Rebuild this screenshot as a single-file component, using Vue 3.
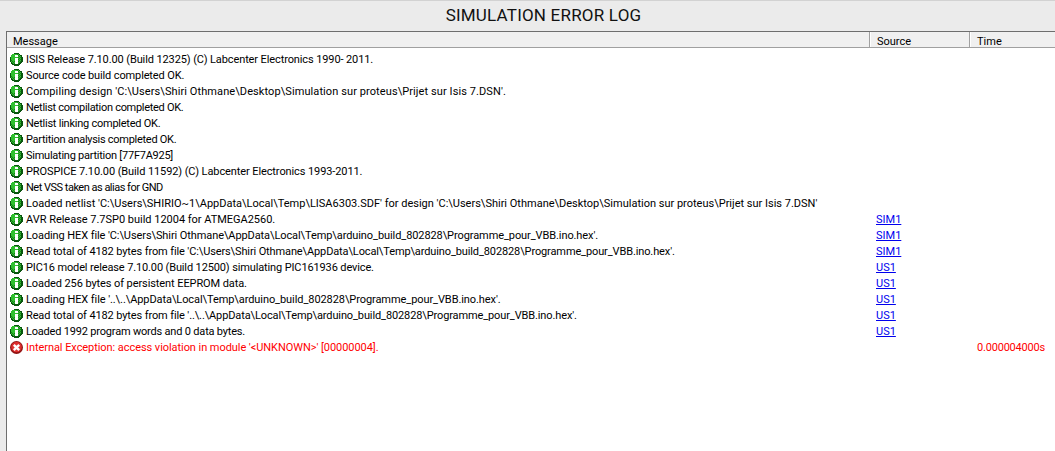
<script setup>
const rows = [
  { m: "ISIS Release 7.10.00 (Build 12325) (C) Labcenter Electronics 1990- 2011.", ls: -0.11 },
  { m: "Source code build completed OK.", ls: -0.13 },
  { m: "Compiling design 'C:\\Users\\Shiri Othmane\\Desktop\\Simulation sur proteus\\Prijet sur Isis 7.DSN'.", ls: 0.09 },
  { m: "Netlist compilation completed OK.", ls: -0.3 },
  { m: "Netlist linking completed OK.", ls: -0.24 },
  { m: "Partition analysis completed OK.", ls: -0.28 },
  { m: "Simulating partition [77F7A925]", ls: -0.25 },
  { m: "PROSPICE 7.10.00 (Build 11592) (C) Labcenter Electronics 1993-2011.", ls: -0.1 },
  { m: "Net VSS taken as alias for GND", ls: -0.5 },
  { m: "Loaded netlist 'C:\\Users\\SHIRIO~1\\AppData\\Local\\Temp\\LISA6303.SDF' for design 'C:\\Users\\Shiri Othmane\\Desktop\\Simulation sur proteus\\Prijet sur Isis 7.DSN'", ls: 0 },
  { m: "AVR Release 7.7SP0 build 12004 for ATMEGA2560.", s: "SIM1", ls: -0.02 },
  { m: "Loading HEX file 'C:\\Users\\Shiri Othmane\\AppData\\Local\\Temp\\arduino_build_802828\\Programme_pour_VBB.ino.hex'.", s: "SIM1", ls: -0.09 },
  { m: "Read total of 4182 bytes from file 'C:\\Users\\Shiri Othmane\\AppData\\Local\\Temp\\arduino_build_802828\\Programme_pour_VBB.ino.hex'.", s: "SIM1", ls: -0.12 },
  { m: "PIC16 model release 7.10.00 (Build 12500) simulating PIC161936 device.", s: "US1", ls: -0.13 },
  { m: "Loaded 256 bytes of persistent EEPROM data.", s: "US1", ls: -0.09 },
  { m: "Loading HEX file '..\\..\\AppData\\Local\\Temp\\arduino_build_802828\\Programme_pour_VBB.ino.hex'.", s: "US1", ls: -0.08 },
  { m: "Read total of 4182 bytes from file '..\\..\\AppData\\Local\\Temp\\arduino_build_802828\\Programme_pour_VBB.ino.hex'.", s: "US1", ls: -0.12 },
  { m: "Loaded 1992 program words and 0 data bytes.", s: "US1", ls: -0.19 },
  { m: "Internal Exception: access violation in module '<UNKNOWN>' [00000004].", t: "0.000004000s", err: true, ls: -0.06 },
];
</script>

<template>
  <div class="window">
    <div class="topline"></div>
    <h1 class="title">SIMULATION ERROR LOG</h1>
    <div class="table">
      <div class="head">
        <div class="hc c-msg">Message</div>
        <div class="hc c-src">Source</div>
        <div class="hc c-time">Time</div>
      </div>
      <div class="body">
        <svg class="defs" width="0" height="0">
          <defs>
            <pattern id="dith" width="2" height="2" patternUnits="userSpaceOnUse">
              <rect x="0" y="0" width="1" height="1" fill="#06400a" />
              <rect x="1" y="1" width="1" height="1" fill="#06400a" />
            </pattern>
          </defs>
        </svg>
        <div v-for="(r, i) in rows" :key="i" class="row" :class="{ err: r.err }">
          <div class="c-msg cell">
            <svg v-if="!r.err" class="ico" viewBox="0 0 13 13" shape-rendering="crispEdges">
              <circle cx="6.500" cy="6.500" r="6.500" fill="#0a5c10" />
              <circle cx="6" cy="6" r="5.300" fill="#2fc02f" />
              <circle cx="6.500" cy="6.500" r="6.200" fill="url(#dith)" opacity="0.55" />
              <circle cx="4.500" cy="4.500" r="3.800" fill="#2fc02f" />
              <rect x="5" y="2" width="3" height="2" fill="#fff" />
              <rect x="5" y="5" width="3" height="6" fill="#fff" />
            </svg>
            <svg v-else class="ico" viewBox="0 0 13 13">
              <circle cx="6.500" cy="6.500" r="6.500" fill="#8e1212" />
              <circle cx="6.500" cy="6" r="5.300" fill="#dc2f2f" />
              <path d="M3.800 3.800l5.400 5.400M9.200 3.800l-5.400 5.400" stroke="#fff" stroke-width="2.400" />
            </svg>
            <span class="msg" :style="{ letterSpacing: r.ls + 'px' }">{{ r.m }}</span>
          </div>
          <div class="c-src cell"><a v-if="r.s" class="link">{{ r.s }}</a></div>
          <div class="c-time cell time">{{ r.t }}</div>
        </div>
      </div>
    </div>
  </div>
</template>

<style>
html, body { margin: 0; overflow: hidden; }
</style>

<style scoped>
.window {
  width: 1055px;
  height: 451px;
  background: #ebebeb;
  display: flex;
  flex-direction: column;
  overflow: hidden;
  font-family: Roboto, "Liberation Sans", sans-serif;
  font-size: 11px;
  color: #000;
}
.topline { height: 1px; background: #d2d2d2; flex: none; }
.title {
  margin: 0;
  height: 30px;
  line-height: 29px;
  flex: none;
  text-align: center;
  font-weight: 400;
  font-size: 17px;
  letter-spacing: 0.2px;
  padding-left: 32px;
  box-sizing: border-box;
  color: #111;
}
.table {
  flex: 1;
  margin-left: 6px;
  background: #fff;
  border-left: 1px solid #6e6e6e;
  border-top: 1px solid #6e6e6e;
}
.head {
  display: flex;
  height: 16px;
  box-sizing: border-box;
  background: #f0f0f0;
  border-bottom: 1px solid #a0a0a0;
}
.hc { line-height: 19px; padding-left: 6px; box-sizing: border-box; border-right: 1px solid #a0a0a0; box-shadow: 1px 0 0 #fff; }
.hc.c-src, .hc.c-time { padding-left: 7px; }
.hc.c-time { border-right: 0; box-shadow: none; }
.body { padding-top: 4px; position: relative; }
.defs { position: absolute; }
.row { display: flex; height: 16px; line-height: 16px; }
.c-msg { width: 863px; flex: none; }
.c-src { width: 100px; flex: none; }
.c-time { flex: 1; }
.row .c-msg { display: flex; align-items: center; padding-left: 3px; box-sizing: border-box; white-space: nowrap; }
.row .c-src { padding-left: 6px; box-sizing: border-box; }
.ico { width: 13px; height: 13px; flex: none; margin: 0 3px 2px 0; }
.link { color: #0000ee; text-decoration: underline; }
.err { color: #f00; }
.time { text-align: right; padding-right: 10px; letter-spacing: -0.2px; }
</style>
